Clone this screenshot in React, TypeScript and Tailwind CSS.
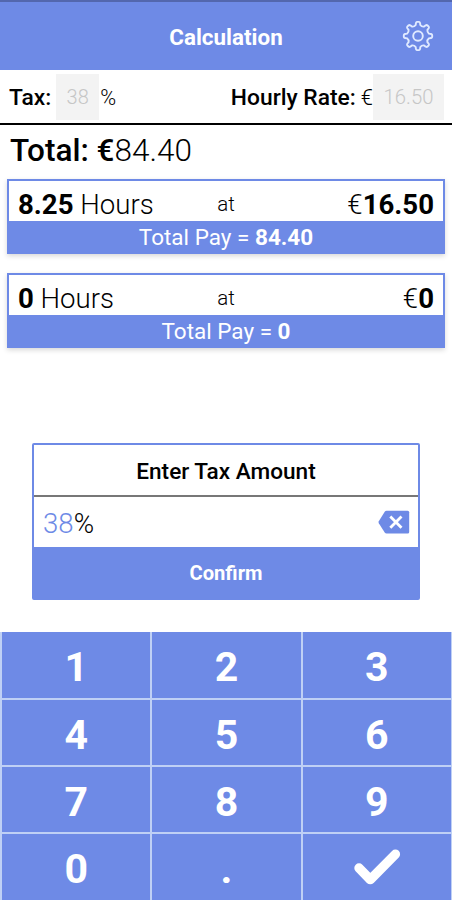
import React from "react";

const point = (radius: number, degrees: number) => {
  const a = ((degrees - 90) * Math.PI) / 180;
  return `${(16 + radius * Math.cos(a)).toFixed(2)} ${(16 + radius * Math.sin(a)).toFixed(2)}`;
};

// Eight rounded teeth joined by scalloped valleys.
const gearPath =
  Array.from({ length: 8 }, (_, i) => {
    const c = i * 45;
    return `${i === 0 ? "M" : "L"}${point(11.2, c - 12)} L${point(13.2, c - 9)} Q${point(14.2, c - 7)} ${point(14.2, c - 4)} L${point(14.2, c + 4)} Q${point(14.2, c + 7)} ${point(13.2, c + 9)} L${point(11.2, c + 12)} Q${point(9.8, c + 22.5)} ${point(11.2, c + 33)}`;
  }).join(" ") + " Z";

function GearIcon() {
  return (
    <svg className="size-8" viewBox="0 0 32 32" fill="none" stroke="#e0eaff" strokeWidth="1.9" strokeLinejoin="round">
      <path d={gearPath} />
      <circle cx="16" cy="16" r="4.8" />
    </svg>
  );
}

function BackspaceIcon() {
  return (
    <svg className="h-6 w-8" viewBox="0 0 32 24" fill="none">
      <path d="M8.6 .7H29.6Q31.2 .7 31.2 2.3V22Q31.2 23.6 29.6 23.6H8.6Q7.4 23.6 6.7 22.6L.8 13.2Q.2 12.2 .8 11.2L6.7 1.7Q7.4 .7 8.6 .7Z" fill="#6e8ae6" />
      <path d="M12.3 6.6 23.5 17.8M23.5 6.6 12.3 17.8" stroke="#fff" strokeWidth="2.8" />
    </svg>
  );
}

function CheckIcon() {
  return (
    <svg className="-mt-[6px] h-9 w-12" viewBox="0 0 48 36" fill="none" stroke="#fff" strokeWidth="9.4" strokeLinecap="round" strokeLinejoin="round">
      <path d="M6 19 17.3 30.6 42.4 5.2" />
    </svg>
  );
}

function ShiftCard({ hours, rate, pay }: { hours: string; rate: string; pay: string }) {
  return (
    <section className="mx-[7px] h-[75px] border-2 border-[#6e8ae6] bg-white shadow-[0_2px_5px_rgba(0,0,0,0.16)]">
      <div className="grid h-10 grid-cols-3 items-center px-[9px] text-[27.6px] leading-[40px]">
        <div className="whitespace-nowrap pt-[4px] font-light">
          <span className="font-bold">{hours}</span> Hours
        </div>
        <div className="pt-[2px] text-center text-[20.5px] font-light">at</div>
        <div className="pt-[4px] text-right">
          <span className="font-light">€</span>
          <span className="font-bold">{rate}</span>
        </div>
      </div>
      <div className="h-[31px] bg-[#6e8ae6] text-center text-[22.5px] leading-[33px] text-white">
        Total Pay = <span className="font-bold">{pay}</span>
      </div>
    </section>
  );
}

const keys = ["1", "2", "3", "4", "5", "6", "7", "8", "9", "0", ".", "ok"];

export default function App() {
  return (
    <main className="flex h-[900px] w-[452px] flex-col overflow-hidden bg-white font-[Roboto,sans-serif] text-black">
      <header className="grid h-[70px] shrink-0 grid-cols-[1fr_auto_1fr] items-center border-t-2 border-[#5367ae] bg-[#6e8ae6] text-white">
        <span />
        <h1 className="pt-[3px] text-[22.4px] font-bold">Calculation</h1>
        <button className="mr-[18px] justify-self-end">
          <GearIcon />
        </button>
      </header>

      <div className="flex h-[55px] shrink-0 items-center justify-between border-b-2 border-black pl-[9px] pr-[8px] text-[22.8px]">
        <div className="flex items-center">
          <span className="pt-[3px] font-medium">Tax:</span>
          <span className="ml-[5px] flex h-[46px] w-[43px] items-center justify-center bg-[#f3f3f3] pt-px text-[20px] font-light text-[#c6c6c6]">38</span>
          <span className="ml-px pt-[3px] text-[21.5px] font-light">%</span>
        </div>
        <div className="flex items-center">
          <span className="pt-[3px] font-medium">Hourly Rate:</span>
          <span className="ml-[5px] pt-[2px] text-[22px] font-light">€</span>
          <span className="flex h-[46px] w-[71px] items-center justify-center bg-[#f3f3f3] pt-px text-[20.3px] font-light text-[#c6c6c6]">16.50</span>
        </div>
      </div>

      <div className="h-[54px] shrink-0 pl-[10px] text-[31.5px] font-light leading-[51px]">
        <span className="font-medium">Total: €</span>84.40
      </div>

      <div className="flex shrink-0 flex-col gap-[19px]">
        <ShiftCard hours="8.25" rate="16.50" pay="84.40" />
        <ShiftCard hours="0" rate="0" pay="0" />
      </div>

      <section className="mx-[32px] mt-[95px] h-[157px] shrink-0 rounded-[2px] border-2 border-[#6e8ae6]">
        <h2 className="h-[52px] border-b-2 border-[#777] text-center text-[22.6px] font-medium leading-[54px]">Enter Tax Amount</h2>
        <div className="flex h-[50px] items-center justify-between pl-[9px] pr-[8px] text-[27.6px] font-light">
          <span className="pt-[4px]">
            <span className="text-[#6e8ae6]">38</span>%
          </span>
          <BackspaceIcon />
        </div>
        <button className="block h-[51px] w-full bg-[#6e8ae6] pt-[2px] text-[20.2px] font-bold text-white">Confirm</button>
      </section>

      <div className="mt-[32px] grid h-[268px] shrink-0 grid-cols-3 grid-rows-[66px_65px_65px_66px] gap-[2px] bg-[#bfd0f5] pl-[2px] pr-px">
        {keys.map((key) => (
          <button key={key} className="flex items-center justify-center bg-[#6e8ae6] pt-[5px] text-[41px] font-bold leading-none text-white">
            {key === "ok" ? <CheckIcon /> : key}
          </button>
        ))}
      </div>
    </main>
  );
}
